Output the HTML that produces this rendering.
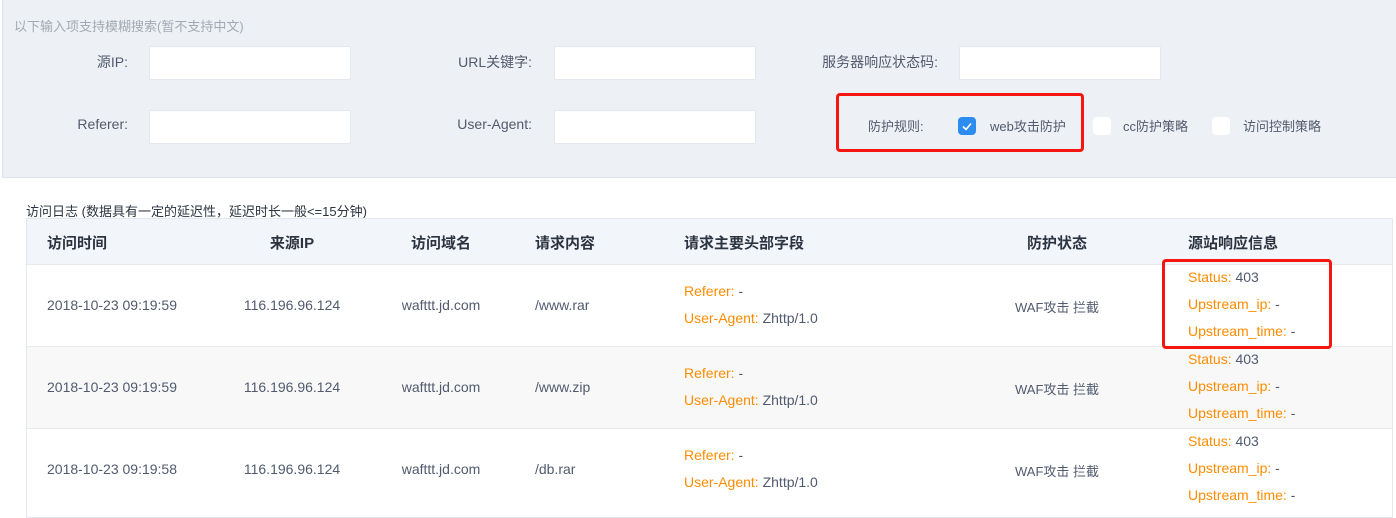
<!DOCTYPE html><html><head><meta charset="utf-8"><style>
*{margin:0;padding:0;box-sizing:border-box}
body{width:1396px;height:509px;overflow:hidden;background:#fff;font-family:"Liberation Sans","Noto Sans CJK SC",sans-serif;font-size:14px;color:#515a6e;position:relative}
.a{position:absolute;white-space:nowrap}
.top{position:absolute;left:2px;top:0;width:1394px;height:178px;background:#edf1f5;border-left:1px solid #dde3ea;border-bottom:1px solid #dde3ea}
.inp{position:absolute;width:202px;height:34px;background:#fff;border:1px solid #e3e8ee;border-radius:2px}
.lbl{position:absolute;text-align:right;width:120px}
.cb{position:absolute;width:18px;height:18px;background:#fff;border-radius:4px}
.tbl{position:absolute;left:26px;top:218px;width:1367px;height:300px;border:1px solid #e3e8ee}
.row{position:absolute;left:0;width:1365px;height:82px;border-top:1px solid #e8eaec}
.o{color:#ff8c00}
.c{transform:translateX(-50%)}
.h{font-weight:bold;font-size:15px;color:#2b3440}
</style></head><body>
<div class="top"></div>
<div class="a" style="left:14px;top:16px;font-size:13px;color:#a3a9b2">以下输入项支持模糊搜索(暂不支持中文)</div>
<div class="lbl" style="left:8px;top:52px">源IP:</div><div class="inp" style="left:149px;top:46px"></div>
<div class="lbl" style="left:412px;top:52px">URL关键字:</div><div class="inp" style="left:554px;top:46px"></div>
<div class="lbl" style="left:738px;top:52px;width:200px">服务器响应状态码:</div><div class="inp" style="left:959px;top:46px"></div>
<div class="lbl" style="left:8px;top:116px">Referer:</div><div class="inp" style="left:149px;top:110px"></div>
<div class="lbl" style="left:412px;top:116px">User-Agent:</div><div class="inp" style="left:554px;top:110px"></div>
<div class="a" style="left:836px;top:93px;width:248px;height:59px;border:3px solid #f5170f;border-radius:4px"></div>
<div class="a" style="left:868px;top:116px;font-size:13px">防护规则:</div>
<div class="cb" style="left:958px;top:117px;background:#2d8cf0"><svg width="18" height="18"><path d="M5 9.5l3 3 5-6" stroke="#fff" stroke-width="1.6" fill="none"/></svg></div>
<div class="a" style="left:990px;top:116px;font-size:13px">web攻击防护</div>
<div class="cb" style="left:1093px;top:117px"></div>
<div class="a" style="left:1123px;top:116px;font-size:13px">cc防护策略</div>
<div class="cb" style="left:1212px;top:117px"></div>
<div class="a" style="left:1243px;top:116px;font-size:13px">访问控制策略</div>
<div class="a" style="left:26px;top:201px;font-size:13px;color:#2b3440">访问日志 (数据具有一定的延迟性，延迟时长一般&lt;=15分钟)</div>
<div class="tbl">
<div class="a" style="left:0;top:0;width:1365px;height:45px;background:#f2f5fa"></div>
<div class="a h" style="left:20px;top:13px">访问时间</div>
<div class="a h c" style="left:265px;top:13px">来源IP</div>
<div class="a h c" style="left:414px;top:13px">访问域名</div>
<div class="a h" style="left:508px;top:13px">请求内容</div>
<div class="a h" style="left:657px;top:13px">请求主要头部字段</div>
<div class="a h c" style="left:1030px;top:13px">防护状态</div>
<div class="a h" style="left:1161px;top:13px">源站响应信息</div>
<div class="row" style="top:45px"><div class="a" style="left:20px;top:32px">2018-10-23 09:19:59</div><div class="a c" style="left:265px;top:32px">116.196.96.124</div><div class="a c" style="left:414px;top:32px">wafttt.jd.com</div><div class="a" style="left:508px;top:32px">/www.rar</div><div class="a" style="left:657px;top:18px"><span class="o">Referer:</span> -</div><div class="a" style="left:657px;top:45px"><span class="o">User-Agent:</span> Zhttp/1.0</div><div class="a c" style="left:1030px;top:32px;font-size:13px">WAF攻击 拦截</div><div class="a" style="left:1161px;top:4px"><span class="o">Status:</span> 403</div><div class="a" style="left:1161px;top:31px"><span class="o">Upstream_ip:</span> -</div><div class="a" style="left:1161px;top:58px"><span class="o">Upstream_time:</span> -</div></div>
<div class="row" style="top:127px;background:#f8f8f9"><div class="a" style="left:20px;top:32px">2018-10-23 09:19:59</div><div class="a c" style="left:265px;top:32px">116.196.96.124</div><div class="a c" style="left:414px;top:32px">wafttt.jd.com</div><div class="a" style="left:508px;top:32px">/www.zip</div><div class="a" style="left:657px;top:18px"><span class="o">Referer:</span> -</div><div class="a" style="left:657px;top:45px"><span class="o">User-Agent:</span> Zhttp/1.0</div><div class="a c" style="left:1030px;top:32px;font-size:13px">WAF攻击 拦截</div><div class="a" style="left:1161px;top:4px"><span class="o">Status:</span> 403</div><div class="a" style="left:1161px;top:31px"><span class="o">Upstream_ip:</span> -</div><div class="a" style="left:1161px;top:58px"><span class="o">Upstream_time:</span> -</div></div>
<div class="row" style="top:209px"><div class="a" style="left:20px;top:32px">2018-10-23 09:19:58</div><div class="a c" style="left:265px;top:32px">116.196.96.124</div><div class="a c" style="left:414px;top:32px">wafttt.jd.com</div><div class="a" style="left:508px;top:32px">/db.rar</div><div class="a" style="left:657px;top:18px"><span class="o">Referer:</span> -</div><div class="a" style="left:657px;top:45px"><span class="o">User-Agent:</span> Zhttp/1.0</div><div class="a c" style="left:1030px;top:32px;font-size:13px">WAF攻击 拦截</div><div class="a" style="left:1161px;top:4px"><span class="o">Status:</span> 403</div><div class="a" style="left:1161px;top:31px"><span class="o">Upstream_ip:</span> -</div><div class="a" style="left:1161px;top:58px"><span class="o">Upstream_time:</span> -</div></div>
</div>
<div class="a" style="left:1162px;top:259px;width:170px;height:90px;border:3px solid #f5170f;border-radius:4px"></div>
</body></html>
